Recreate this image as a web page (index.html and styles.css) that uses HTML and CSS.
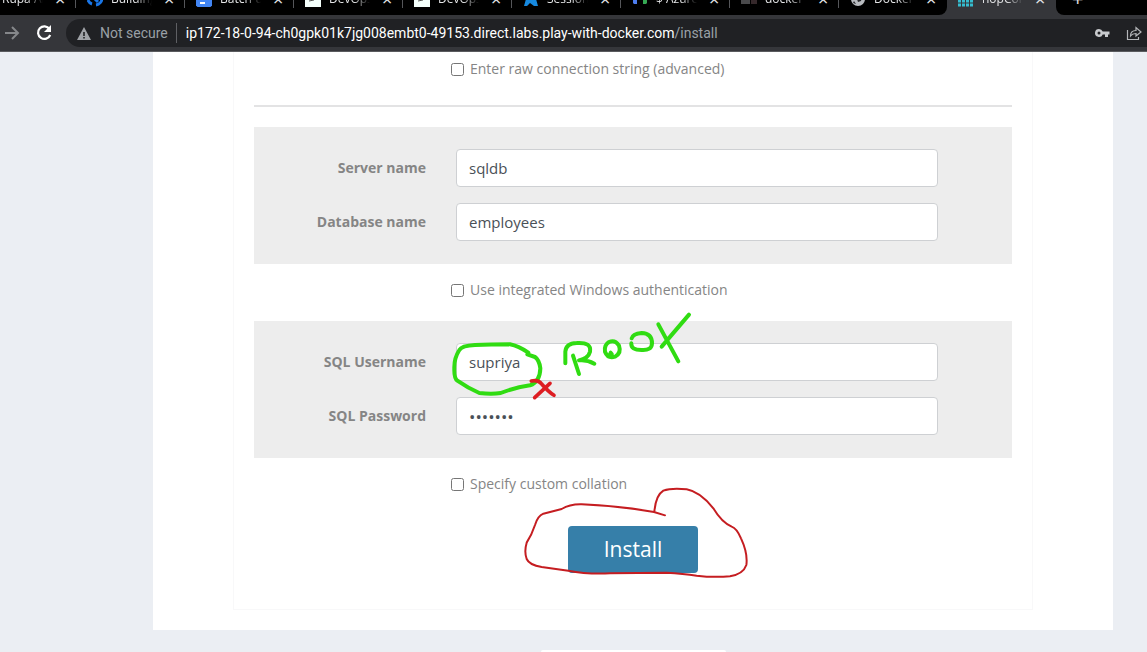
FILE: index.html
```
<!DOCTYPE html>
<html lang="en">
<head>
<meta charset="utf-8">
<title>nopCommerce installation</title>
<link rel="stylesheet" href="styles.css">
</head>
<body>
<header class="browser">
  <div class="tabs">
    <div class="tab tab-first"><span class="title">Rupa Aniket</span><button class="close" aria-label="Close tab">×</button></div>
    <div class="tab"><svg class="icon" viewBox="0 0 16 16"><g fill="none" stroke="#1976e8" stroke-width="3"><path d="M1 9a6 6 0 0 0 4 4M6 6l5 5M9 14a7 7 0 0 0 6-7"/></g></svg><span class="title">Building a</span><button class="close" aria-label="Close tab">×</button></div>
    <div class="tab"><svg class="icon" viewBox="0 0 16 16"><path fill="#4285f4" d="M0 0h16v14.500l-1.500 1.500h-13l-1.500-1.500z"/><path stroke="#fff" stroke-width="2" d="M4 8h8M4 12h5"/></svg><span class="title">Batch-8 v</span><button class="close" aria-label="Close tab">×</button></div>
    <div class="tab"><svg class="icon" viewBox="0 0 16 16"><path fill="#f4fffb" d="M0 0h16v16H0z"/><path stroke="#555" d="M4 10l5-1"/></svg><span class="title">DevOps T</span><button class="close" aria-label="Close tab">×</button></div>
    <div class="tab"><svg class="icon" viewBox="0 0 16 16"><path fill="#f4fffb" d="M0 0h16v16H0z"/><path stroke="#555" d="M4 10l5-1"/></svg><span class="title">DevOps T</span><button class="close" aria-label="Close tab">×</button></div>
    <div class="tab"><svg class="icon" viewBox="0 0 16 16"><path fill="#1689e0" d="M5 1h6l4 14h-4l-4-3-3 3H1z"/></svg><span class="title">Session 1</span><button class="close" aria-label="Close tab">×</button></div>
    <div class="tab"><svg class="icon" viewBox="0 0 16 16"><path fill="#4d7df0" d="M1 4h4v9H2l-1-1z"/><path fill="#35a853" d="M11 4h4v8l-1 1h-3z"/></svg><span class="title">$ Azure V</span><button class="close" aria-label="Close tab">×</button></div>
    <div class="tab"><svg class="icon" viewBox="0 0 16 16"><path fill="#4a4a4c" d="M0 8h9v5H0z"/><path fill="#35282b" d="M10 8h6v5h-6z"/></svg><span class="title">docker</span><button class="close" aria-label="Close tab">×</button></div>
    <div class="tab tab-before"><svg class="icon" viewBox="0 0 16 16"><circle cx="8" cy="8" r="7" fill="#b8bbc0"/><path fill="#26272a" d="M3 5l4 3 1 3 3-1 1-4-4-4zM4 10l2 3-3-1z"/></svg><span class="title">Docker P</span><button class="close" aria-label="Close tab">×</button></div>
    <div class="tab active"><svg class="icon" viewBox="0 0 16 16"><path stroke="#35bdd0" stroke-width="3" stroke-dasharray="3 1" d="M0 10h16M0 14h16"/></svg><span class="title">nopCom</span><button class="close" aria-label="Close tab">×</button></div>
    <div class="new"><button class="plus" aria-label="New tab">+</button></div>
  </div>
  <div class="toolbar">
    <button class="tool" aria-label="Forward"><svg class="arrow" viewBox="0 0 20 20"><path d="M5 10h13M12 4l6 6-6 6" fill="none" stroke="#85878a" stroke-width="2"/></svg></button>
    <button class="tool reload" aria-label="Reload"><svg class="arrow" viewBox="0 0 20 20"><path d="M15.500 6A6.300 6.300 0 1 0 16.200 12" fill="none" stroke="#fff" stroke-width="2.200"/><path d="M17 2v7h-7z" fill="#fff"/></svg></button>
    <div class="address">
      <svg class="warning" viewBox="0 0 14 13"><path fill="#a0a3a7" fill-rule="evenodd" d="M7 0l7 13H0zM6.200 5v4h1.600V5zM6.200 10v1.600h1.600V10z"/></svg>
      <span class="insecure">Not secure</span>
      <span class="url">ip172-18-0-94-ch0gpk01k7jg008embt0-49153.direct.labs.play-with-docker.com<span class="path">/install</span></span>
      <svg class="key" viewBox="0 0 16 16"><path fill="#c8cacd" fill-rule="evenodd" d="M5 4a4 4 0 1 0 3.700 5.500H11V12h3V9.500h1.500v-3H8.700A4 4 0 0 0 5 4zM5 6.500a1.500 1.500 0 1 1 0 3 1.500 1.500 0 0 1 0-3z"/></svg>
      <svg class="share" viewBox="0 0 16 16"><path d="M1.500 5v9.500h11V12M4.500 11c0-4 2-5.500 5.500-5.500V2.500L15 7l-5 4V8.500c-2 0-4 .5-5.500 2.500z" fill="none" stroke="#b4b6b9" stroke-width="1.200"/></svg>
    </div>
  </div>
</header>
<main class="page">
  <div class="sheet">
    <form class="card">
      <label class="check"><input type="checkbox">Enter raw connection string (advanced)</label>
      <hr class="rule">
      <section class="group">
        <label class="name" for="server">Server name</label><input class="field" id="server" type="text" value="sqldb">
        <label class="name" for="database">Database name</label><input class="field" id="database" type="text" value="employees">
      </section>
      <label class="check"><input type="checkbox">Use integrated Windows authentication</label>
      <section class="group">
        <label class="name" for="user">SQL Username</label><input class="field" id="user" type="text" value="supriya">
        <label class="name" for="password">SQL Password</label><input class="field password" id="password" type="password" value="sqlpass">
        <svg class="ink ink-user" viewBox="0 0 900 420" aria-hidden="true">
          <g fill="none" stroke="#30dc12" stroke-width="12" stroke-linecap="round" stroke-linejoin="round">
            <path d="M265 158Q235 138 210 133Q150 133 105 135Q65 137 58 150Q42 175 43 205Q42 235 52 242Q85 265 118 279Q155 283 182 279Q225 262 270 256Q300 245 301 205Q298 180 285 171L262 163"/>
            <path d="M376 190L376 155Q378 130 410 129Q455 126 450 155Q445 175 417 181Q440 178 463 191M399 167L417 222"/>
            <path d="M511 161Q520 165 512 158M507 126Q492 135 495 155Q503 176 525 170Q545 160 537 137Q525 118 507 126"/>
            <path d="M574 130Q572 150 605 150Q635 152 636 130Q636 100 605 99Q578 102 575 115M655 73L715 184M747 44L665 140"/>
          </g>
          <path d="M274 243Q295 238 305 252Q325 275 342 286M330 250L284 293" fill="none" stroke="#dd1d22" stroke-width="11" stroke-linecap="round"/>
        </svg>
      </section>
      <label class="check"><input type="checkbox">Specify custom collation</label>
      <div class="submit">
        <button class="install" type="button">Install</button>
        <svg class="ink ink-install" viewBox="0 0 750 546" aria-hidden="true"><path d="M465 136L432 126Q330 108 215 103Q180 102 155 117L100 131Q83 138 75 165Q65 195 50 218Q42 245 50 267Q58 285 95 291L175 302Q230 313 300 310L470 308Q520 311 560 317Q610 323 660 319Q700 312 709 285Q714 250 693 205Q680 175 665 170Q635 157 610 115Q570 65 530 58Q485 53 460 62Q437 76 433 126" fill="none" stroke="#c51d21" stroke-width="6" stroke-linecap="round" stroke-linejoin="round"/></svg>
      </div>
    </form>
  </div>
  <footer class="footer"></footer>
</main>
</body>
</html>
```
FILE: styles.css
```
* { box-sizing: border-box; }
body { margin: 0; overflow: hidden; height: 100vh; background: #ebeef3; color: #858585; font: 14px/20px "Open Sans", "Noto Sans", sans-serif; }
button { border: 0; padding: 0; background: none; color: inherit; font: inherit; }
svg { flex: none; }

.tabs { display: flex; align-items: flex-end; height: 15px; overflow: hidden; background: #35363a; color: #e4e5e7; font-size: 12px; line-height: 16px; }
.tab { display: flex; align-items: center; flex: none; width: 109px; height: 32px; padding: 8px 11px 8px 11px; background: #000; position: relative; }
.tab::after { content: ""; position: absolute; right: 0; bottom: 7px; width: 1px; height: 16px; background: #55565a; }
.tab-first { width: 76px; padding-left: 2px; }
.icon { width: 16px; height: 16px; margin-right: 8px; }
.title { flex: 1; min-width: 0; overflow: hidden; white-space: nowrap; mask-image: linear-gradient(to right, #000 60%, transparent); }
.close { width: 10px; margin-left: 12px; font-size: 18px; line-height: 16px; }
.tab-before { width: 108px; border-bottom-right-radius: 8px; }
.tab-before::after, .active::after { display: none; }
.active { background: #35363a; }
.new { flex: 1; height: 32px; padding-left: 16px; background: #000; border-bottom-left-radius: 8px; }
.plus { font-size: 20px; line-height: 32px; }

.toolbar { display: flex; align-items: center; height: 37px; background: #35363a; border-bottom: 1px solid #5a5b5e; }
.tool { display: flex; flex: none; width: 24px; }
.reload { width: 30px; margin-left: 10px; }
.arrow { width: 20px; height: 20px; }
.address { display: flex; align-items: center; flex: 1; min-width: 0; height: 28px; margin-left: 2px; padding: 0 5px 0 11px; border-radius: 14px 0 0 14px; background: #202124; color: #9aa0a6; font-family: Roboto, "Open Sans", sans-serif; white-space: nowrap; }
.warning { width: 14px; height: 13px; }
.insecure { margin: 0 8px 0 9px; }
.url { flex: 1; min-width: 0; overflow: hidden; padding-left: 9px; border-left: 1px solid #5f6064; color: #fff; }
.path { color: #9aa0a6; }
.key, .share { width: 16px; height: 16px; }
.share { margin-left: 16px; }

.page { display: flex; flex-direction: column; gap: 20px; }
.sheet { margin: 0 34px 0 153px; padding: 0 80px 20px; background: #fff; }
.card { display: flex; flex-direction: column; padding: 7px 20px 36px; border: 1px solid #f8f8f9; border-top: 0; }
.check { display: flex; align-items: center; gap: 6px; align-self: flex-start; height: 20px; margin-left: 197px; }
.check input { width: 13px; height: 13px; margin: 0; }
.rule { width: 100%; height: 2px; margin: 26px 0 20px; border: 0; background: #e3e3e4; }
.group { position: relative; display: grid; grid-template-columns: 172px 1fr; gap: 16px 30px; align-items: center; padding: 22px 74px 23px 0; background: #ededed; }
.name { text-align: right; font-weight: 700; }
.field { width: 100%; height: 38px; padding: 0 12px; border: 1px solid #ced0d3; border-radius: 4px; background: #fff; color: #495057; font: inherit; font-size: 15px; }
.password { font-size: 17px; }
.group + .check { margin-top: 16px; margin-bottom: 21px; }
.submit { position: relative; align-self: center; margin-top: 11px; }
.install { display: block; padding: 0 36px; border-radius: 4px; background: #367fa9; color: #fff; font-size: 21px; line-height: 47px; }
.ink { position: absolute; pointer-events: none; overflow: visible; }
.ink-user { top: -21px; left: 186px; width: 300px; height: 140px; }
.ink-install { top: -56px; left: -58px; width: 250px; height: 182px; }
.footer { align-self: center; width: 185px; height: 2px; margin-left: 119px; border-radius: 2px 2px 0 0; background: #fff; }
```
